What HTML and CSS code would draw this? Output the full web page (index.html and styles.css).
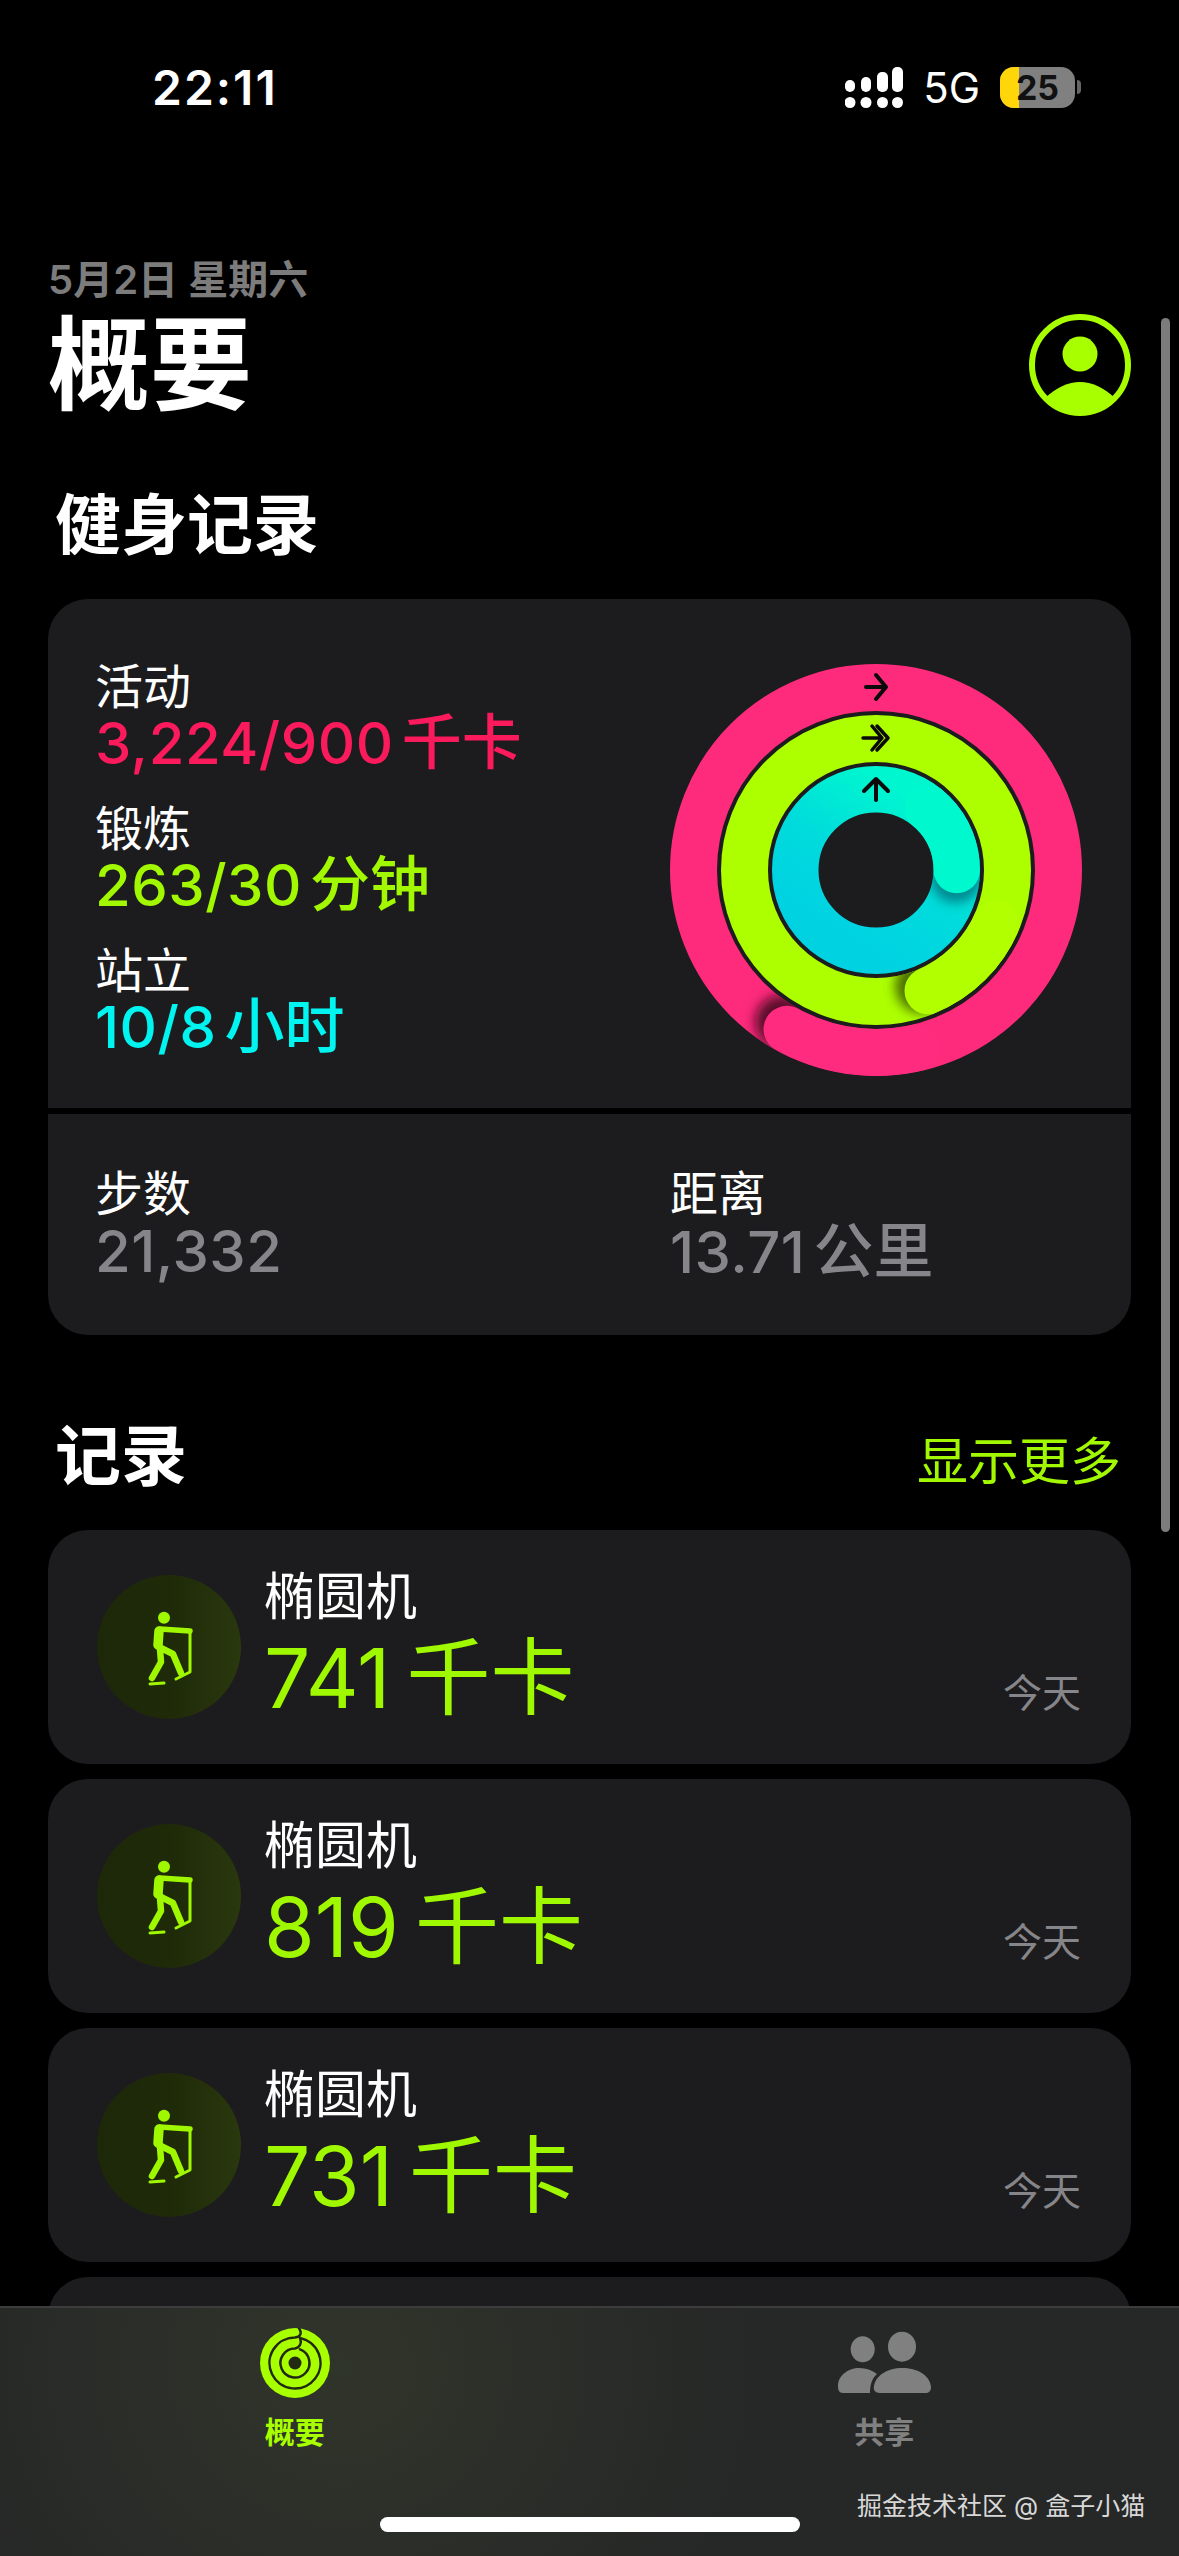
FILE: index.html
```html
<!DOCTYPE html>
<html lang="zh-CN">
<head>
    <meta charset="UTF-8">
    <meta name="viewport" content="width=device-width, initial-scale=1.0">
    <title>健身记录 - 概要</title>
    <link rel="stylesheet" href="styles.css">
</head>
<body>
    <div class="phone">
        <!-- Status bar -->
        <header class="status-bar">
            <span class="status-time">22:11</span>
            <div class="status-right">
                <svg class="signal" width="58" height="41" viewBox="0 0 58 41" fill="#fff">
                    <rect x="0" y="13" width="10" height="12" rx="5"/>
                    <rect x="16" y="10" width="10" height="15" rx="5"/>
                    <rect x="32" y="5" width="11" height="20" rx="5"/>
                    <rect x="47" y="0" width="11" height="25" rx="5"/>
                    <circle cx="5" cy="35.500" r="5.500"/>
                    <circle cx="21" cy="35.500" r="5.500"/>
                    <circle cx="37.500" cy="35.500" r="5.500"/>
                    <circle cx="52.500" cy="35.500" r="5.500"/>
                </svg>
                <span class="network">5G</span>
                <div class="battery">
                    <div class="battery-body">
                        <div class="battery-level"></div>
                        <span class="battery-num">25</span>
                    </div>
                    <div class="battery-nub"></div>
                </div>
            </div>
        </header>

        <main class="content">
            <div class="page-head">
                <div>
                    <div class="date">5月2日 星期六</div>
                    <h1 class="page-title">概要</h1>
                </div>
                <svg class="avatar" width="102" height="102" viewBox="-51 -51 102 102">
                    <circle r="48" fill="none" stroke="#a8ff00" stroke-width="6"/>
                    <circle cy="-11" r="17.500" fill="#a8ff00"/>
                    <path d="M -35 33 Q 0 1 35 33 A 48 48 0 0 1 -35 33 Z" fill="#a8ff00"/>
                </svg>
            </div>

            <h2 class="section-title">健身记录</h2>

            <!-- Activity summary -->
            <section class="summary-card">
                <div class="rings-row">
                    <div class="metrics">
                        <div class="metric">
                            <div class="metric-label">活动</div>
                            <div class="metric-value move">3,224/900<span class="unit">千卡</span></div>
                        </div>
                        <div class="metric">
                            <div class="metric-label">锻炼</div>
                            <div class="metric-value exercise">263/30<span class="unit">分钟</span></div>
                        </div>
                        <div class="metric">
                            <div class="metric-label">站立</div>
                            <div class="metric-value stand">10/8<span class="unit">小时</span></div>
                        </div>
                    </div>
                    <svg class="rings" width="412" height="412" viewBox="-206 -206 412 412">
                        <defs>
                            <linearGradient id="cyanGrad" x1="0.8" y1="0.1" x2="0.3" y2="0.9">
                                <stop offset="0" stop-color="#00f6cf"/>
                                <stop offset="0.55" stop-color="#00dbdc"/>
                                <stop offset="1" stop-color="#00d2e2"/>
                            </linearGradient>
                            <filter id="capBlur" x="-60%" y="-60%" width="220%" height="220%">
                                <feGaussianBlur stdDeviation="6"/>
                            </filter>
                            <mask id="pinkMask" maskUnits="userSpaceOnUse" x="-206" y="-206" width="412" height="412">
                                <circle r="182.500" fill="none" stroke="#fff" stroke-width="47"/>
                            </mask>
                            <mask id="greenMask" maskUnits="userSpaceOnUse" x="-206" y="-206" width="412" height="412">
                                <circle r="131.500" fill="none" stroke="#fff" stroke-width="47"/>
                            </mask>
                            <mask id="cyanMask" maskUnits="userSpaceOnUse" x="-206" y="-206" width="412" height="412">
                                <circle r="80.750" fill="none" stroke="#fff" stroke-width="46.500"/>
                            </mask>
                        </defs>

                        <!-- move ring -->
                        <circle r="182.500" fill="none" stroke="#fe2b7c" stroke-width="47"/>
                        <g mask="url(#pinkMask)">
                            <circle cx="-94" cy="152" r="27" fill="#5a0a2c" filter="url(#capBlur)"/>
                            <path d="M 40 178 A 182.500 182.500 0 0 1 -89 159.300" fill="none" stroke="#fe2b7f" stroke-width="47" stroke-linecap="round"/>
                        </g>

                        <!-- exercise ring -->
                        <circle r="131.500" fill="none" stroke="#adff00" stroke-width="47"/>
                        <g mask="url(#greenMask)">
                            <circle cx="46" cy="116" r="27" fill="#4c6e00" filter="url(#capBlur)"/>
                            <path d="M 120 54 A 131.500 131.500 0 0 1 52 120.800" fill="none" stroke="#b2ff00" stroke-width="47" stroke-linecap="round"/>
                        </g>

                        <!-- stand ring -->
                        <circle r="80.750" fill="none" stroke="url(#cyanGrad)" stroke-width="46.500"/>
                        <g mask="url(#cyanMask)">
                            <circle cx="80" cy="7" r="26" fill="#00868f" filter="url(#capBlur)"/>
                            <path d="M 52 -62 A 80.750 80.750 0 0 1 80.750 0" fill="none" stroke="#00f8cf" stroke-width="46.500" stroke-linecap="round"/>
                        </g>

                        <!-- arrows -->
                        <g fill="none" stroke="#0a0a0a" stroke-width="4" stroke-linecap="round" stroke-linejoin="round">
                            <path d="M -10 -183 H 10 M 0 -195 L 10 -183 L 0 -171"/>
                            <path d="M -13 -132 H 6 M -4 -144 L 6 -132 L -4 -120" stroke-width="3.500"/>
                            <path d="M 1 -144 L 12 -132 L 1 -120" stroke-width="3.500"/>
                            <path d="M 0 -70 V -90 M -12 -79 L 0 -91 L 12 -79"/>
                        </g>
                    </svg>
                </div>
                <div class="totals-row">
                    <div class="total">
                        <div class="metric-label">步数</div>
                        <div class="metric-value plain">21,332</div>
                    </div>
                    <div class="total">
                        <div class="metric-label">距离</div>
                        <div class="metric-value plain">13.71<span class="unit">公里</span></div>
                    </div>
                </div>
            </section>

            <div class="records-head">
                <h2 class="section-title">记录</h2>
                <span class="show-more">显示更多</span>
            </div>

            <!-- Workout list, filled in by the template below -->
            <div id="workoutList" class="workout-list"></div>
        </main>

        <div class="scrollbar"></div>

        <!-- Tab bar -->
        <nav class="tab-bar">
            <div class="tab active">
                <svg class="tab-icon" width="70" height="70" viewBox="-35 -35 70 70">
                    <circle r="35" fill="#a8ff00"/>
                    <g fill="none" stroke="#232a14" stroke-width="2.500" stroke-linecap="round">
                        <path d="M 4 -35 C 7 -30 6 -26 0 -25.500 A 25.500 25.500 0 1 0 5 -25"/>
                        <path d="M 5 -25 C 7 -20 5 -15.500 0 -14.500 A 14.500 14.500 0 1 0 5 -13.600"/>
                    </g>
                    <circle r="6.500" fill="#232a14"/>
                </svg>
                <span class="tab-label">概要</span>
            </div>
            <div class="tab">
                <svg class="tab-icon" width="94" height="70" viewBox="12 8 94 70" fill="#808080">
                    <ellipse cx="37.700" cy="29.300" rx="12" ry="13"/>
                    <ellipse cx="77" cy="26.700" rx="14" ry="15"/>
                    <path d="M 13 66 C 13 55 24 48 34 48 C 41 48 47 50 52 54 C 47 58 45 65 45 73 H 18 C 14 73 13 70 13 66 Z"/>
                    <path d="M 49 66 C 51 55 63 48 77 48 C 92 48 105 55 106 67 C 106 71 104 73 100 73 H 55 C 50 73 48 70 49 66 Z"/>
                </svg>
                <span class="tab-label">共享</span>
            </div>
        </nav>

        <div class="watermark">掘金技术社区 @ 盒子小猫</div>
        <div class="home-indicator"></div>
    </div>

    <template id="workoutTpl">
        <article class="workout-card">
            <div class="workout-icon">
                <svg width="80" height="90" viewBox="0 0 80 90">
                    <circle cx="35" cy="15.700" r="6" fill="#a0f800"/>
                    <g fill="none" stroke="#a0f800" stroke-linecap="round" stroke-linejoin="round">
                        <path d="M 30 29 L 29 43" stroke-width="9.500"/>
                        <path d="M 31 27 L 61 29" stroke-width="5.500"/>
                        <path d="M 61 29 V 70 L 47 77" stroke-width="3"/>
                        <path d="M 30 45 L 44 52 L 52 71" stroke-width="6.500"/>
                        <path d="M 31 47 L 32 60 L 23 76" stroke-width="6.500"/>
                        <path d="M 21 82 L 35 81" stroke-width="3"/>
                    </g>
                </svg>
            </div>
            <div class="workout-text">
                <div class="workout-name"></div>
                <div class="workout-value"></div>
            </div>
            <div class="workout-date">今天</div>
        </article>
    </template>

    <script>
        // Workout data
        const workouts = [
            { name: '椭圆机', kcal: 741 },
            { name: '椭圆机', kcal: 819 },
            { name: '椭圆机', kcal: 731 },
            { name: '', kcal: null }
        ];

        const list = document.getElementById('workoutList');
        const tpl = document.getElementById('workoutTpl');

        workouts.forEach(w => {
            const card = tpl.content.cloneNode(true);
            card.querySelector('.workout-name').textContent = w.name;
            if (w.kcal) {
                card.querySelector('.workout-value').innerHTML = `${w.kcal}<span class="unit">千卡</span>`;
            }
            list.appendChild(card);
        });
    </script>
</body>
</html>
```

FILE: styles.css
```css
* {
    margin: 0;
    padding: 0;
    box-sizing: border-box;
    font-family: Inter, 'Noto Sans CJK SC', sans-serif;
}

body {
    background-color: #000;
    color: #fff;
}

.phone {
    position: relative;
    width: 1179px;
    height: 2556px;
    overflow: hidden;
    background: #000;
}

/* Status bar */
.status-bar {
    display: flex;
    justify-content: space-between;
    align-items: center;
    height: 174px;
    padding: 0 98px 0 152px;
}

.status-time {
    font-size: 48px;
    font-weight: 600;
    letter-spacing: 2px;
}

.status-right {
    display: flex;
    align-items: center;
    gap: 20px;
}

.network {
    font-size: 42px;
    font-weight: 400;
}

.battery {
    display: flex;
    align-items: center;
    gap: 2px;
}

.battery-body {
    position: relative;
    width: 75px;
    height: 41px;
    border-radius: 14px;
    background: #808080;
    overflow: hidden;
    display: flex;
    align-items: center;
    justify-content: center;
}

.battery-level {
    position: absolute;
    left: 0;
    top: 0;
    bottom: 0;
    width: 19px;
    background: #ffd60a;
}

.battery-num {
    position: relative;
    font-size: 34px;
    font-weight: 700;
    color: #111;
}

.battery-nub {
    width: 4px;
    height: 14px;
    border-radius: 0 7px 7px 0;
    background: #666;
}

/* Main content */
.content {
    padding: 80px 48px 0;
}

.page-head {
    display: flex;
    justify-content: space-between;
    align-items: flex-end;
}

.date {
    font-size: 40px;
    font-weight: 600;
    line-height: 52px;
    color: #7c7c7c;
}

.page-title {
    font-size: 102px;
    font-weight: 700;
    line-height: 118px;
}

.avatar {
    margin-bottom: 8px;
}

.section-title {
    font-size: 66px;
    font-weight: 600;
    line-height: 90px;
    margin-left: 7px;
}

.page-head + .section-title {
    margin-top: 56px;
}

/* Summary card */
.summary-card {
    margin-top: 29px;
    background: #1c1c1e;
    border-radius: 40px;
    overflow: hidden;
}

.rings-row {
    display: flex;
    justify-content: space-between;
    align-items: center;
    height: 515px;
    padding: 0 49px 0 47px;
    border-bottom: 6px solid #000;
}

.rings {
    margin-top: 32px;
}

.metrics {
    display: flex;
    flex-direction: column;
    gap: 29px;
    margin-top: 7px;
}

.metric-label {
    font-size: 48px;
    line-height: 56px;
    color: #fff;
}

.metric-value {
    font-size: 58px;
    font-weight: 500;
    line-height: 58px;
    letter-spacing: 0.5px;
    white-space: nowrap;
}

.metric .metric-value {
    margin-top: -2px;
}

.metric-value .unit {
    margin-left: 8px;
    font-size: 60px;
    letter-spacing: 0;
}

.move {
    color: #fb1a5c;
}

.exercise {
    color: #a2f800;
}

.stand {
    color: #00f4f0;
}

.plain {
    color: #86868a;
}

.totals-row {
    display: flex;
    height: 221px;
    padding: 52px 0 0 47px;
}

.total {
    flex: none;
    width: 575px;
}

/* Records */
.records-head {
    display: flex;
    justify-content: space-between;
    align-items: center;
    margin-top: 76px;
    height: 90px;
}

.show-more {
    font-size: 51px;
    color: #a2f800;
    margin-right: 10px;
    margin-top: 4px;
}

.workout-list {
    display: flex;
    flex-direction: column;
    gap: 15px;
    margin-top: 29px;
}

.workout-card {
    position: relative;
    display: flex;
    align-items: center;
    gap: 23px;
    height: 234px;
    padding: 0 50px 0 49px;
    background: #1c1c1e;
    border-radius: 40px;
}

.workout-icon {
    display: flex;
    align-items: center;
    justify-content: center;
    width: 144px;
    height: 144px;
    border-radius: 50%;
    background: linear-gradient(90deg, #1c2808, #1e2a08 50%, #2a380e);
}

.workout-text {
    flex: 1;
}

.workout-name {
    font-size: 51px;
    line-height: 62px;
}

.workout-value {
    font-size: 82px;
    font-weight: 400;
    line-height: 100px;
    color: #a0f800;
}

.workout-value .unit {
    margin-left: 16px;
    font-size: 84px;
}

.workout-date {
    align-self: flex-end;
    margin-bottom: 46px;
    font-size: 39px;
    color: #86868a;
}

/* Tab bar sits over the list */
.tab-bar {
    position: absolute;
    left: 0;
    right: 0;
    bottom: 0;
    height: 250px;
    display: flex;
    padding-top: 20px;
    border-top: 2px solid #3c3c3c;
    background: radial-gradient(ellipse 460px 420px at 340px 60px, #30352a, #262727 90%);
}

.tab {
    width: 50%;
    display: flex;
    flex-direction: column;
    align-items: center;
    height: 122px;
    justify-content: space-between;
    color: #808080;
}

.tab.active {
    color: #a8ff00;
}

.tab-label {
    font-size: 30px;
    font-weight: 600;
    line-height: 36px;
}

.scrollbar {
    position: absolute;
    left: 1161px;
    top: 318px;
    width: 9px;
    height: 1214px;
    border-radius: 5px;
    background: #7c7c7c;
}

.watermark {
    position: absolute;
    left: 857px;
    top: 2488px;
    font-size: 25px;
    line-height: 36px;
    color: #d8d8d8;
    white-space: nowrap;
}

.home-indicator {
    position: absolute;
    left: 380px;
    top: 2517px;
    width: 420px;
    height: 15px;
    border-radius: 8px;
    background: #fff;
}
```
